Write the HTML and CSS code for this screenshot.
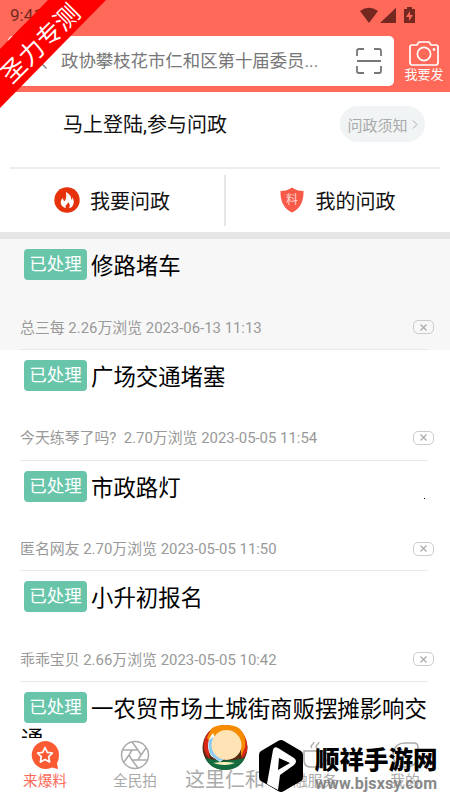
FILE: index.html
```html
<!DOCTYPE html>
<html lang="zh-CN">
<head>
<meta charset="utf-8">
<title>来爆料</title>
<link rel="stylesheet" href="styles.css">
</head>
<body>
<div class="app">
  <header class="header">
    <div class="status">
      <span class="clock">9:41</span>
      <svg class="status-icons" width="56" height="17" viewBox="0 0 56 17" fill="#742820">
        <path d="M0 4Q9-2.500 18 4L9 16ZM20 16 36 .8V16Z"/>
        <path fill-rule="evenodd" d="M47 0h5v2h3v14H44V2h3ZM50 4l-4 6h3v4l4-6h-3Z"/>
      </svg>
    </div>
    <div class="search-row">
      <div class="search">
        <svg class="magnifier" width="18" height="18" viewBox="0 0 18 18" fill="none" stroke="#777" stroke-width="1.300"><circle cx="7" cy="7" r="6"/><path d="m11.500 11.500 5 5"/></svg>
        <span class="query">政协攀枝花市仁和区第十届委员...</span>
        <svg class="scan" width="26" height="26" viewBox="0 0 26 26" fill="none" stroke="#777" stroke-width="1.800"><path d="M1 8V3q0-2 2-2h5M18 1h5q2 0 2 2v5M1 18v5q0 2 2 2h5M18 25h5q2 0 2-2v-5M1 13h24"/></svg>
      </div>
      <div class="post">
        <svg width="30" height="25" viewBox="0 0 30 25" fill="none" stroke="#fff" stroke-width="1.700"><path d="M3 4h5l2-3h10l2 3h5q2 0 2 2v15q0 3-2 3H3q-2 0-2-3V6q0-2 2-2Z"/><circle cx="15" cy="13" r="6.600"/><circle cx="25" cy="8.500" r="1" fill="#fff" stroke-width="1"/></svg>
        <span>我要发</span>
      </div>
    </div>
  </header>

  <section class="login">
    <span class="login-text">马上登陆,参与问政</span>
    <span class="notice">问政须知<svg width="6" height="9" viewBox="0 0 6 9" fill="none" stroke="#aaa"><path d="m1 .5 4 4-4 4"/></svg></span>
  </section>
  <nav class="actions">
    <div class="action">
      <svg width="26" height="26" viewBox="0 0 26 26"><circle cx="13" cy="13" r="12.700" fill="#e6320a"/><path fill="#fff" d="M12 5q6 3 5 8 2-1 1-3 3 4 1 8-1 3-4 3 2-3-1-6 0 2-2 3-1 2 0 3-4-1-5-4-1-4 2-6 0 3 2 3 2-4 1-9Z"/></svg>
      <span>我要问政</span>
    </div>
    <div class="action action-mine">
      <svg width="24" height="26" viewBox="0 0 24 26"><path fill="#f85a4a" d="M12 .5Q17 4 23.500 4 24 20 12 25.500 0 20 .5 4 7 4 12 .5Z"/><text class="shield-text" x="12" y="16.500" text-anchor="middle">料</text></svg>
      <span>我的问政</span>
    </div>
  </nav>

  <main class="list">
    <article class="item item-active"><h2><b class="tag">已处理</b>修路堵车</h2><div class="meta"><span>总三每 2.26万浏览 2023-06-13 11:13</span><i class="close"><svg width="7" height="7" viewBox="0 0 7 7"><path d="m.5.5 6 6m0-6-6 6"/></svg></i></div></article>
    <article class="item"><h2><b class="tag">已处理</b>广场交通堵塞</h2><div class="meta"><span>今天练琴了吗?&nbsp; 2.70万浏览 2023-05-05 11:54</span><i class="close"><svg width="7" height="7" viewBox="0 0 7 7"><path d="m.5.5 6 6m0-6-6 6"/></svg></i></div></article>
    <article class="item item-dot"><h2><b class="tag">已处理</b>市政路灯</h2><div class="meta"><span>匿名网友 2.70万浏览 2023-05-05 11:50</span><i class="close"><svg width="7" height="7" viewBox="0 0 7 7"><path d="m.5.5 6 6m0-6-6 6"/></svg></i></div></article>
    <article class="item"><h2><b class="tag">已处理</b>小升初报名</h2><div class="meta"><span>乖乖宝贝 2.66万浏览 2023-05-05 10:42</span><i class="close"><svg width="7" height="7" viewBox="0 0 7 7"><path d="m.5.5 6 6m0-6-6 6"/></svg></i></div></article>
    <article class="item"><h2><b class="tag">已处理</b>一农贸市场土城街商贩摆摊影响交通</h2></article>
  </main>

  <footer class="tabs">
    <div class="tab tab-active">
      <svg width="30" height="30" viewBox="0 0 30 30"><path fill="#fb5b32" d="M15 1a14 14 0 0 1 14 14q0 5-2 8l1 6-6-1.500A14 14 0 1 1 15 1Z"/><path d="m15 7.500 2.300 4.800 5.200.7-3.800 3.700.9 5.300-4.600-2.500-4.600 2.500.9-5.300-3.800-3.700 5.200-.7Z" fill="none" stroke="#fff" stroke-width="1.700" stroke-linejoin="round"/></svg>
      <span>来爆料</span>
    </div>
    <div class="tab">
      <svg width="30" height="30" viewBox="0 0 30 30" fill="none" stroke="#aaa" stroke-width="1.500"><circle cx="15" cy="15" r="13.500"/><path d="m12 10 6 0 3 5-3 5h-6l-3-5ZM18 10 12 2M21 15l5-7M18 20h9.500M12 20l6 8M9 15l-5 7M12 10H2.500"/></svg>
      <span>全民拍</span>
    </div>
    <div class="tab tab-center">
      <svg class="emblem" width="46" height="46" viewBox="0 0 46 46">
        <circle cx="23" cy="22.500" r="22.500" fill="#542b12"/>
        <path fill="#146b40" d="M3 33q20 5 40 0-6 12-20 12T3 33Z"/>
        <path fill="#da2618" d="M11 3Q0 11 2 24q2 7 6 10-4-14 6-21Z"/>
        <path fill="#da2618" d="M35 3q12 8 10 23-2 5-6 8 4-14-4-20Z"/>
        <path fill="#f78b00" d="M9 4q4-4 14-4 11 0 15 4 7 7 5 18l-4 10q1-17-8-22-8-4-16-1l-7 8-3-4Z"/>
        <path fill="#fff" d="M11 8Q2 19 9 31l9 6 4-3Z"/>
        <path fill="#8dcaf0" d="M7 15q-3 15 10 21l6-2L11 12Z"/>
        <circle cx="24.500" cy="20" r="15" fill="#fee3b4"/>
        <path fill="#fff2bd" d="M11 38q12-2 22 0-10 4-22 0Z"/>
      </svg>
      <span>这里仁和</span>
    </div>
    <div class="tab">
      <svg width="30" height="30" viewBox="0 0 30 30" fill="none" stroke="#aaa" stroke-width="1.500"><path d="M4 11h20v9q0 7-7 7h-6q-7 0-7-7ZM24 13q5 0 5 4t-6 4M12 8q-2-2 1-4l1-2M17 8q-2-2 1-4l1-2"/></svg>
      <span>融服务</span>
    </div>
    <div class="tab">
      <svg width="30" height="30" viewBox="0 0 30 30" fill="none" stroke="#aaa" stroke-width="1.500"><path d="M3 13q2-10 12-10h9q4 0 4 4v7q0 13-13 13-12 0-12-14Z"/></svg>
      <span>我的</span>
    </div>
  </footer>

  <div class="ribbon"><span>圣力专测</span></div>
  <div class="watermark">
    <svg width="46" height="54" viewBox="0 0 46 54"><path d="M20 2q3-2 6 0l17 10q2 1 2 4v22q0 3-2 4L26 52q-3 2-6 0L3 42q-2-1-2-4V16q0-3 2-4Z" fill="#000"/><path fill="#fff" fill-rule="evenodd" d="M15 11q1-4 5-2l16 10q4 3 0 7L22 36l-2 15-11-6ZM21 19l-1 12 12-7Z"/></svg>
    <div class="brand"><strong>顺祥手游网</strong><span>www.bjsxsy.com</span></div>
  </div>
</div>
</body>
</html>
```
FILE: styles.css
```css
* { box-sizing: border-box; }
body { margin: 0; font-family: Roboto, "Noto Sans CJK SC", sans-serif; color: #111; background: #fff; }
svg { display: block; flex: none; }
.app { position: relative; width: 450px; height: 800px; overflow: hidden; display: flex; flex-direction: column; }
.header { flex: none; height: 92px; background: #ff6959; }
.status { height: 36px; display: flex; justify-content: space-between; padding: 6px 34px 0 10px; }
.clock { font-size: 17px; line-height: 19px; color: #742820; }
.status-icons { margin-top: 1px; }
.search-row { display: flex; height: 50px; }
.search { width: 386px; margin-left: 8px; background: #fff; border-radius: 5px; display: flex; align-items: center; padding: 0 12px 0 22px; }
.magnifier { margin-right: 13px; }
.query { flex: 1; font-size: 17.4px; color: #777; white-space: nowrap; line-height: 24px; }
.post { flex: 1; display: flex; flex-direction: column; align-items: center; padding: 5px 0 0 4px; font-size: 13px; line-height: 18px; color: #fff; white-space: nowrap; }
.login { flex: none; height: 77px; margin: 0 10px; border-bottom: 2px solid #eee; display: flex; justify-content: space-between; align-items: flex-start; padding: 14px 15px 0 53px; }
.login-text { font-size: 20px; line-height: 36px; margin-top: 1px; }
.notice { width: 85px; height: 36px; border-radius: 18px; background: #f1f4f4; color: #aaa; font-size: 15px; display: flex; align-items: center; justify-content: center; gap: 4px; white-space: nowrap; }
.actions { flex: none; height: 70px; border-bottom: 7px solid #e6e6e6; display: flex; }
.action { flex: 1; display: flex; align-items: center; gap: 10px; padding-left: 54px; font-size: 20px; line-height: 30px; position: relative; }
.action span { margin-top: 2px; }
.action svg { margin-top: -1px; }
.action-mine { padding-left: 55px; gap: 12px; }
.action-mine::before { content: ""; position: absolute; left: -1px; top: 6px; height: 51px; width: 2px; background: #e6e6e6; }
.shield-text { font-size: 12px; fill: #ffd5cf; }
.list { flex: 1; min-height: 0; overflow: hidden; }
.item { height: 110.8px; padding: 12px 16px 0 21px; position: relative; }
.item-active { background: #f7f7f7; }
.item::after { content: ""; position: absolute; left: 20px; right: 22px; bottom: 0; height: 1px; background: #e9e9e9; }
.item-dot::before { content: ""; position: absolute; left: 424px; top: 37px; width: 1px; height: 1px; background: #000; }
.item h2 { margin: 0; height: 66px; font-size: 22.4px; font-weight: 400; line-height: 30px; color: #000; }
.tag { display: inline-block; vertical-align: top; width: 63px; height: 31px; margin: -2px 4px 1px 3px; border-radius: 4px; background: #68c5aa; color: #fff; font-size: 17.5px; font-weight: 400; line-height: 30px; text-align: center; }
.meta { display: flex; justify-content: space-between; align-items: center; height: 20px; margin-left: -1px; font-size: 14.9px; line-height: 18px; color: #999; white-space: nowrap; }
.meta span { margin-top: 1px; }
.close { width: 21px; height: 14px; border: 1px solid #ccc; border-radius: 5px; display: flex; align-items: center; justify-content: center; }
.close path { stroke: #aaa; stroke-width: 1.2; }
.tabs { flex: none; height: 62px; background: #fff; display: grid; grid-template-columns: repeat(5, 90px); position: relative; }
.tab { display: flex; flex-direction: column; align-items: center; padding-top: 2px; font-size: 14.7px; line-height: 20px; color: #aaa; white-space: nowrap; }
.tab span { margin-top: 2px; }
.tab svg { margin-bottom: -1px; }
.tab-active { color: #fb6a59; }
.tab-center { font-size: 20px; line-height: 24px; padding-top: 28px; position: relative; }
.tab-center .emblem { position: absolute; left: 22px; top: -13px; }
.ribbon { position: absolute; left: 0; top: 0; width: 108px; height: 108px; background: #f00; clip-path: polygon(48px 0, 106px 0, 0 108px, 0 49px); }
.ribbon span { position: absolute; left: -14px; top: 29px; width: 110px; font-size: 24.8px; line-height: 30px; color: #fff; text-align: center; white-space: nowrap; transform: rotate(-45deg); }
.watermark { position: absolute; left: 258px; top: 739px; display: flex; gap: 11px; }
.brand { display: flex; flex-direction: column; padding-top: 7px; white-space: nowrap; }
.brand strong { font-size: 24.5px; line-height: 30px; font-weight: 900; color: #000; }
.brand span { font-size: 16px; line-height: 16px; font-weight: 700; color: #888; letter-spacing: .2px; }
```
